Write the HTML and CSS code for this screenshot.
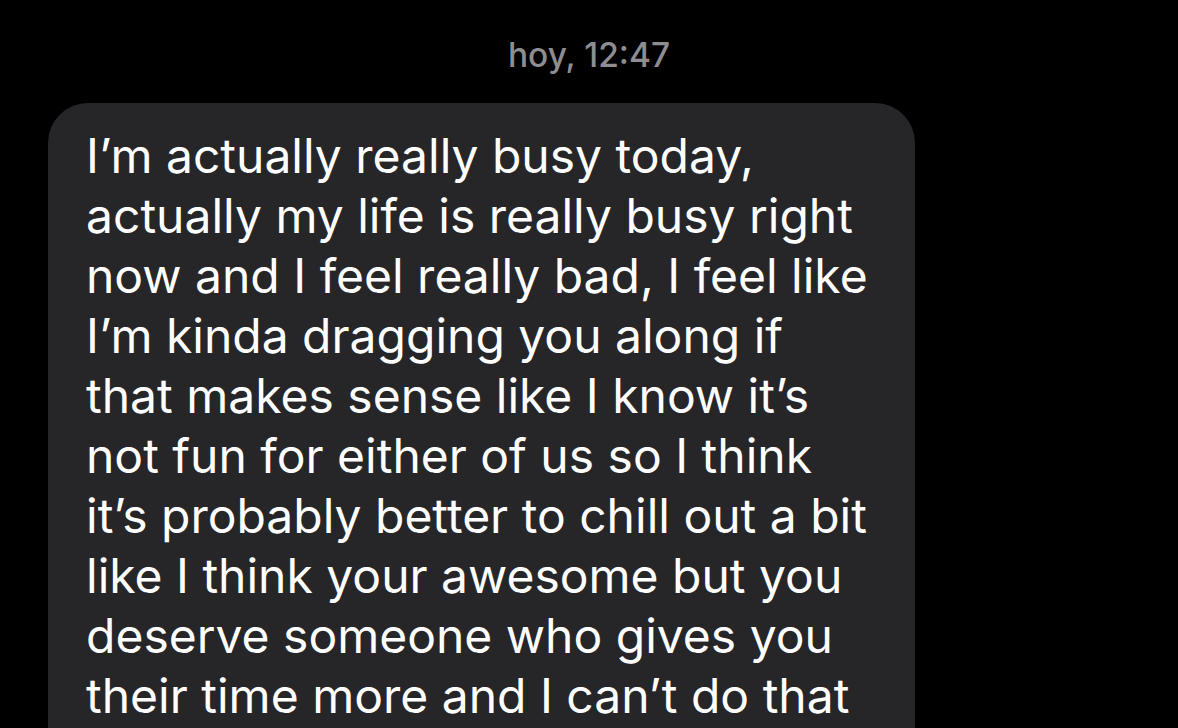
FILE: index.html
```html
<!DOCTYPE html>
<html lang="en">
<head>
<meta charset="utf-8">
<title>Message</title>
<link rel="stylesheet" href="styles.css">
</head>
<body>
<div class="screen">
  <div class="timestamp">hoy, 12:47</div>
  <div class="bubble">
    <p class="msg">I’m actually really busy today,<br>actually my life is really busy right<br>now and I feel really bad, I feel like<br>I’m kinda dragging you along if<br>that makes sense like I know it’s<br>not fun for either of us so I think<br>it’s probably better to chill out a bit<br>like I think your awesome but you<br>deserve someone who gives you<br>their time more and I can’t do that</p>
  </div>
</div>
</body>
</html>
```
FILE: styles.css
```css
html, body {
  margin: 0;
  padding: 0;
  background: #000;
  height: 100%;
  overflow: hidden;
}
.screen {
  width: 1178px;
  height: 728px;
  overflow: hidden;
  background: #000;
  font-family: Inter, "Noto Sans", "Liberation Sans", sans-serif;
}
.timestamp {
  padding-top: 35px;
  height: 40px;
  line-height: 40px;
  font-size: 33.5px;
  font-weight: 500;
  color: #8d8d92;
  text-align: center;
}
.bubble {
  margin: 28px 0 0 48px;
  width: 867px;
  box-sizing: border-box;
  background: #262629;
  border-radius: 40px;
  padding: 23px 30px 40px 38px;
}
.msg {
  margin: 0;
  color: #fff;
  font-size: 48px;
  line-height: 60px;
  white-space: nowrap;
}
```
